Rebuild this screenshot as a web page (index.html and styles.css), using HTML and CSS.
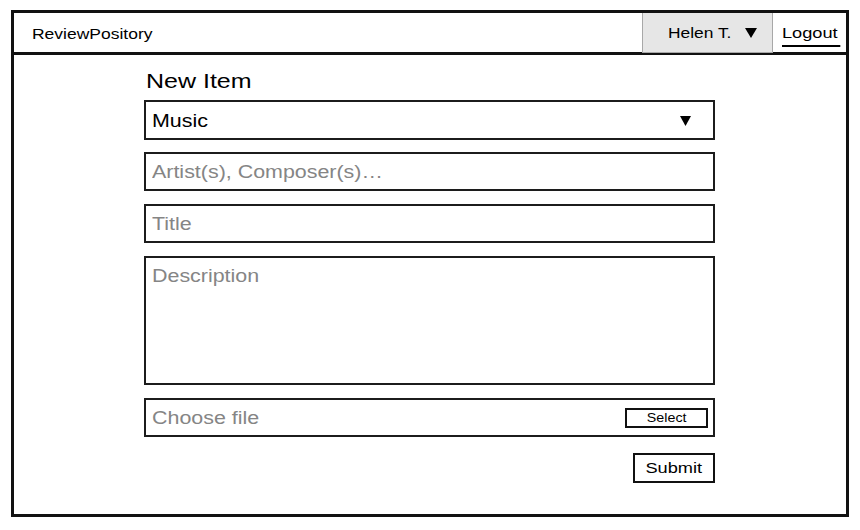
FILE: index.html
```html
<!DOCTYPE html>
<html lang="en">
<head>
<meta charset="utf-8">
<title>ReviewPository - New Item</title>
<link rel="stylesheet" href="styles.css">
</head>
<body>
<div class="frame">
  <header class="header">
    <div class="brand"><span class="tx">ReviewPository</span></div>
    <div class="user">
      <span class="tx user-name">Helen T.</span>
      <svg class="caret" width="12" height="10" viewBox="0 0 12 10"><polygon points="0,0 12,0 6,10" fill="#000"/></svg>
    </div>
    <div class="logout"><span class="tx logout-link">Logout</span></div>
  </header>
  <main class="content">
    <h1 class="title"><span class="tx">New Item</span></h1>
    <div class="form">
      <div class="field select">
        <span class="tx value">Music</span>
        <svg class="caret" width="11" height="10" viewBox="0 0 11 10"><polygon points="0,0 11,0 5.5,10" fill="#000"/></svg>
      </div>
      <div class="field"><span class="tx ph">Artist(s), Composer(s)…</span></div>
      <div class="field"><span class="tx ph">Title</span></div>
      <div class="field area"><span class="tx ph">Description</span></div>
      <div class="field file">
        <span class="tx ph">Choose file</span>
        <div class="btn-select"><span class="tx-c">Select</span></div>
      </div>
      <div class="actions">
        <div class="btn-submit"><span class="tx-c">Submit</span></div>
      </div>
    </div>
  </main>
</div>
</body>
</html>
```
FILE: styles.css
```css
* { box-sizing: border-box; }
html, body { margin: 0; padding: 0; background: #fff; }
body {
  font-family: "Liberation Sans", Arial, Helvetica, sans-serif;
  color: #000;
}
.tx {
  display: inline-block;
  transform: scaleX(1.19);
  transform-origin: left center;
  white-space: nowrap;
}
.tx-c {
  display: inline-block;
  transform: scaleX(1.19);
  transform-origin: center center;
  white-space: nowrap;
}
.frame {
  margin: 10px 0 0 11px;
  width: 838px;
  height: 507px;
  border: 3px solid #111;
}
.header {
  height: 42px;
  border-bottom: 3px solid #111;
  display: flex;
  align-items: stretch;
}
.brand {
  flex: 1;
  display: flex;
  align-items: center;
  padding: 2px 0 0 18px;
  font-size: 14.7px;
}
.user {
  width: 131px;
  height: 40px;
  background: #e6e6e6;
  border: 1px solid #a8a8a8;
  border-top: none;
  display: flex;
  align-items: center;
  padding-left: 25px;
  font-size: 14.6px;
}
.user-name { width: 77px; }
.user .caret { display: block; margin-top: 1px; }
.logout {
  width: 64px;
  margin-left: 9px;
  display: flex;
  align-items: center;
  font-size: 15.3px;
}
.logout-link {
  padding: 0 2px 3px 0;
  border-bottom: 2px solid #000;
  margin-top: 5px;
}
.content {
  padding: 13px 0 0 130px;
}
.title {
  margin: 0 0 7px;
  padding-left: 2px;
  font-size: 21px;
  font-weight: normal;
  line-height: 25px;
  height: 25px;
}
.form {
  width: 571px;
  display: flex;
  flex-direction: column;
  gap: 13px;
}
.field {
  height: 39px;
  border: 2px solid #1c1c1c;
  display: flex;
  align-items: center;
  padding: 2px 5px 0 6px;
  font-size: 18px;
}
.ph { color: #858585; }
.select { height: 40px; margin-bottom: -1px; }
.select .caret { margin-left: auto; margin-right: 17px; display: block; }
.area {
  height: 129px;
  align-items: flex-start;
  padding-top: 8px;
}
.file { padding-right: 5px; }
.btn-select {
  margin-left: auto;
  width: 83px;
  height: 20px;
  border: 2px solid #111;
  font-size: 12px;
  display: flex;
  align-items: center;
  justify-content: center;
  margin-top: -1px;
}
.actions {
  display: flex;
  justify-content: flex-end;
  margin-top: 3px;
}
.btn-submit {
  width: 82px;
  height: 30px;
  border: 2px solid #111;
  font-size: 15.3px;
  display: flex;
  align-items: center;
  justify-content: center;
}
```
